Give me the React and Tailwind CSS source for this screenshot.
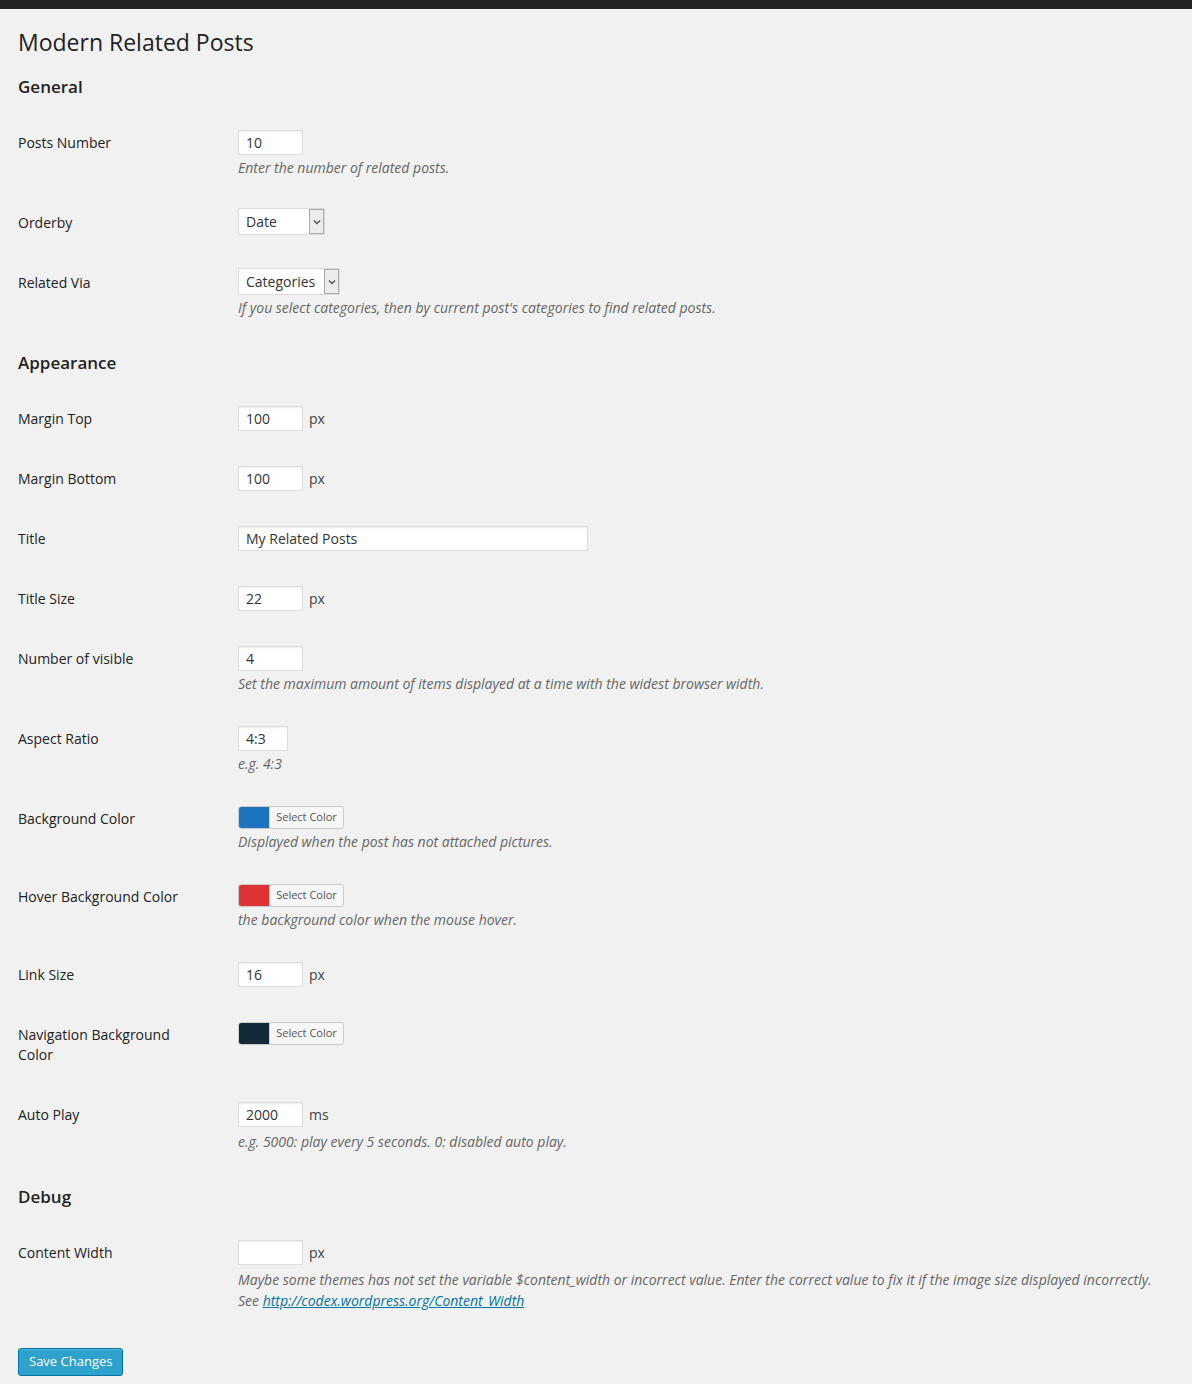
import React from "react";

const Input = ({ w = "w-[65px]", value = "" }) => (
  <div className={`${w} h-[25px] my-[2px] bg-white border border-[#dddddd] shadow-[inset_0_1px_2px_rgba(0,0,0,0.07)] px-[7px] flex items-center text-[14px] text-[#333]`}>
    {value}
  </div>
);

const Select = ({ value, w }) => (
  <div className={`${w} h-[27px] bg-white border border-[#dddddd] flex items-stretch text-[14px] text-[#333]`}>
    <div className="flex-1 flex items-center px-[7px]">{value}</div>
    <div className="w-[15px] border border-[#aaa] bg-[#ececec] flex items-center justify-center">
      <svg width="8" height="6" viewBox="0 0 8 6"><path d="M1 1.5 L4 4.5 L7 1.5" stroke="#555" strokeWidth="1.5" fill="none" /></svg>
    </div>
  </div>
);

const Picker = ({ color }) => (
  <div className="flex w-[106px] h-[23px] my-[2px] border border-[#ccc] rounded-[3px] bg-[#f7f7f7] overflow-hidden">
    <div className="w-[30px] h-full" style={{ background: color }} />
    <div className="flex-1 flex items-center justify-center text-[11px] text-[#555] border-l border-[#ccc]">Select Color</div>
  </div>
);

const Desc = ({ children }) => (
  <p className="mt-[2px] text-[14px] leading-[21px] italic text-[#666]">{children}</p>
);

const Row = ({ label, children }) => (
  <div className="flex">
    <div className="w-[220px] shrink-0 pt-[20px] pb-[20px] pr-[10px] text-[14px] leading-[20px] text-[#222]">{label}</div>
    <div className="py-[15px] px-0 flex-1">{children}</div>
  </div>
);

const Px = ({ children, unit = "px", w }) => (
  <div className="flex items-center gap-[6px]">
    <Input value={children} w={w} />
    <span className="text-[14px] text-[#444]">{unit}</span>
  </div>
);

const H2 = ({ children }) => (
  <h2 className="mt-[20px] mb-[16px] text-[17px] leading-[20px] font-semibold text-[#222]">{children}</h2>
);

export default function App() {
  return (
    <div className="min-h-[1384px] bg-[#f1f1f1]" style={{ fontFamily: '"Open Sans", sans-serif' }}>
      <div className="h-[9px] bg-[#222]" />
      <div className="px-[18px]">
        <h1 className="pt-[20px] text-[23px] leading-[26px] text-[#222] font-normal">Modern Related Posts</h1>
        <h2 className="mt-[22px] mb-[16px] text-[17px] leading-[20px] font-semibold text-[#222]">General</h2>
        <Row label="Posts Number">
          <Input value="10" />
          <Desc>Enter the number of related posts.</Desc>
        </Row>
        <Row label="Orderby">
          <Select value="Date" w="w-[87px]" />
        </Row>
        <Row label="Related Via">
          <Select value="Categories" w="w-[102px]" />
          <Desc>If you select categories, then by current post's categories to find related posts.</Desc>
        </Row>
        <H2>Appearance</H2>
        <Row label="Margin Top"><Px>100</Px></Row>
        <Row label="Margin Bottom"><Px>100</Px></Row>
        <Row label="Title"><Input w="w-[350px]" value="My Related Posts" /></Row>
        <Row label="Title Size"><Px>22</Px></Row>
        <Row label="Number of visible">
          <Input value="4" />
          <Desc>Set the maximum amount of items displayed at a time with the widest browser width.</Desc>
        </Row>
        <Row label="Aspect Ratio">
          <Input w="w-[50px]" value="4:3" />
          <Desc>e.g. 4:3</Desc>
        </Row>
        <Row label="Background Color">
          <Picker color="#1e73be" />
          <Desc>Displayed when the post has not attached pictures.</Desc>
        </Row>
        <Row label="Hover Background Color">
          <Picker color="#dd3333" />
          <Desc>the background color when the mouse hover.</Desc>
        </Row>
        <Row label="Link Size"><Px>16</Px></Row>
        <Row label={<>Navigation Background<br />Color</>}>
          <Picker color="#132b39" />
        </Row>
        <Row label="Auto Play">
          <Px unit="ms">2000</Px>
          <Desc>e.g. 5000: play every 5 seconds. 0: disabled auto play.</Desc>
        </Row>
        <H2>Debug</H2>
        <Row label="Content Width">
          <Px></Px>
          <Desc>
            Maybe some themes has not set the variable $content_width or incorrect value. Enter the correct value to fix it if the image size displayed incorrectly.<br />
            See <a className="underline text-[#0074a2]">http://codex.wordpress.org/Content_Width</a>
          </Desc>
        </Row>
        <div className="pt-[22px]">
          <button className="h-[28px] px-[10px] bg-[#2ea2cc] border border-[#0074a2] rounded-[3px] text-white text-[13px] shadow-[inset_0_1px_0_rgba(120,200,230,0.5)]">Save Changes</button>
        </div>
      </div>
    </div>
  );
}
